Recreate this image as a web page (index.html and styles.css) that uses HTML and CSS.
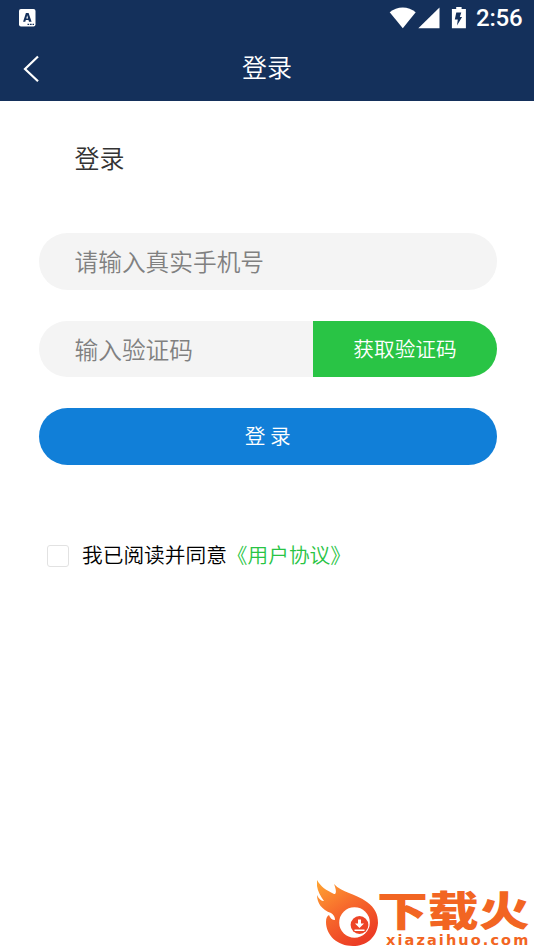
FILE: index.html
```html
<!DOCTYPE html>
<html lang="zh-CN">
<head>
<meta charset="utf-8">
<title>登录</title>
<link rel="stylesheet" href="styles.css">
</head>
<body>
<header class="header">
  <div class="status">
    <svg class="app-icon" width="17" height="18" viewBox="0 0 17 18"><rect width="16.5" height="17.5" rx="2" fill="#fff"/><path fill-rule="evenodd" fill="#14305b" d="M6.9 4h2.7l3 8.7H10l-.5-1.6H6.8l-.5 1.6H4.1ZM8.2 6.3 7.3 9.4h1.8Z"/><path d="M8.5 15.3h1.7m.8 0h1.7m.8 0h1.5" stroke="#14305b" stroke-width="1.2"/></svg>
    <div class="status-right">
      <svg width="81" height="24" viewBox="389 6 81 24" fill="#fff"><path d="M389.7 12.2C397 5.8 408.500 5.800 415.700 12.200L402.800 28.200Z"/><path d="M439.500 7.500V28.300H418.300Z"/><path d="M456.200 7h5.400v2h4.300v19.300h-14V9h4.300Z"/><path fill="#14305b" d="M456.300 12.500h5l-1.500 4.600h2.300L457 25.600l.8-6h-3Z"/></svg>
      <span class="time">2:56</span>
    </div>
  </div>
  <nav class="nav">
    <svg class="back" width="17" height="28" viewBox="0 0 17 28"><path d="M15 1.500 2 14l13 12.300" fill="none" stroke="#fff" stroke-width="2.200"/></svg>
    <h1 class="nav-title">登录</h1>
  </nav>
</header>
<main class="main">
  <h2 class="heading">登录</h2>
  <form class="form">
    <input class="field" type="text" placeholder="请输入真实手机号">
    <div class="code-row">
      <input class="field code" type="text" placeholder="输入验证码">
      <button class="get-code" type="button">获取验证码</button>
    </div>
    <button class="submit" type="button">登 录</button>
    <div class="agree"><input class="check" type="checkbox" aria-label="同意"><span class="agree-text">我已阅读并同意<a class="link">《用户协议》</a></span></div>
  </form>
</main>
<footer class="brand">
  <svg class="flame" width="64" height="70" viewBox="0 0 64 70">
    <defs><linearGradient id="fire" x1="0" y1="0" x2=".6" y2="1"><stop offset="0" stop-color="#ffa632"/><stop offset=".5" stop-color="#f76a2c"/><stop offset="1" stop-color="#ec3d25"/></linearGradient></defs>
    <path fill="url(#fire)" d="M0 0C4 7 9 10 17 14 20 14 19 9 17 4 25 13 38 13 50 22 58 28 61 34 61 43 60 58 49 66 36 66 20 66 9 55 9 42 9 38 10 36 12 35 13 38 15 40 18 40 18 37 17 35 14 33 5 30 0 23 0 15 2 19 4 21 7 21 2 14-1 8 0 0Z"/>
    <circle cx="37.500" cy="42.500" r="15.300" fill="#fff"/><circle cx="42.500" cy="45" r="8.900" fill="#ed4426"/><path fill="#fff" d="M41 39.500h3v4h3l-4.500 4.500-4.500-4.500h3Zm-3.500 10h10v1.400h-10Z"/>
  </svg>
  <div class="brand-text">
    <div class="brand-name">下载火</div>
    <div class="brand-url">xiazaihuo.com</div>
  </div>
</footer>
</body>
</html>
```
FILE: styles.css
```css
* { box-sizing: border-box; }
body { margin: 0; width: 534px; height: 950px; overflow: hidden; display: flex; flex-direction: column; background: #fff; color: #000; font-family: "Noto Sans CJK SC", sans-serif; font-weight: 350; }
input, button { font-family: inherit; font-weight: inherit; border: 0; margin: 0; outline: 0; }
.header { height: 101px; background: #14305b; color: #fff; flex: none; }
.status { height: 36px; display: flex; justify-content: space-between; padding: 0 13px 0 18.500px; }
.app-icon { margin-top: 9px; }
.status-right { display: flex; padding-top: 6px; gap: 6px; margin-right: -1px; }
.time { font: 500 24px/25px Roboto, sans-serif; letter-spacing: -.2px; width: 46px; white-space: nowrap; }
.nav { height: 65px; display: grid; grid-template-columns: 60px 1fr 60px; align-items: center; }
.back { margin-left: 23px; }
.nav-title { margin: -5px 0 0; text-align: center; font-size: 25px; line-height: 36px; font-weight: 350; }
.main { padding: 38px 37px 0 38.500px; }
.heading { margin: 0 0 58px 36px; font-size: 25px; line-height: 36px; font-weight: 350; color: #333; }
.form { display: flex; flex-direction: column; gap: 31px; }
.field { width: 100%; height: 56.500px; border-radius: 29px; padding: 0 36px; background: #f4f4f4; font-size: 23.700px; }
.field::placeholder { color: #808080; opacity: 1; }
.code-row { display: flex; height: 56.500px; }
.code { width: 274.500px; border-radius: 29px 0 0 29px; }
.get-code { flex: 1; background: #29c445; color: #fff; border-radius: 0 29px 29px 0; font-size: 20.700px; padding: 0 0 2px; }
.submit { height: 56.500px; border-radius: 29px; background: #117fd8; color: #fff; font-size: 20.700px; padding: 0 0 2px; }
.agree { display: flex; align-items: center; gap: 13px; padding-left: 8.500px; margin-top: 45px; font-size: 20.700px; line-height: 30px; }
.agree-text { margin-top: -2px; }
.check { appearance: none; width: 22px; height: 22px; border: 1.500px solid #e2e2e2; border-radius: 3px; background: #fff; margin-top: 2px; }
.link { color: #29c445; }
.brand { margin-top: auto; height: 70px; display: flex; justify-content: flex-end; padding-right: 4px; color: #f26522; }
.flame { margin-right: -1px; }
.brand-text { width: 150px; }
.brand-name { margin: 8px 0 0 -3px; height: 43px; width: 123px; font-size: 41px; line-height: 40px; font-weight: 900; white-space: nowrap; transform: scaleX(1.24); transform-origin: left; }
.brand-url { margin: 1px 0 0 6px; font: 700 14.500px/17px "DejaVu Sans", sans-serif; letter-spacing: 2.100px; white-space: nowrap; }
```
